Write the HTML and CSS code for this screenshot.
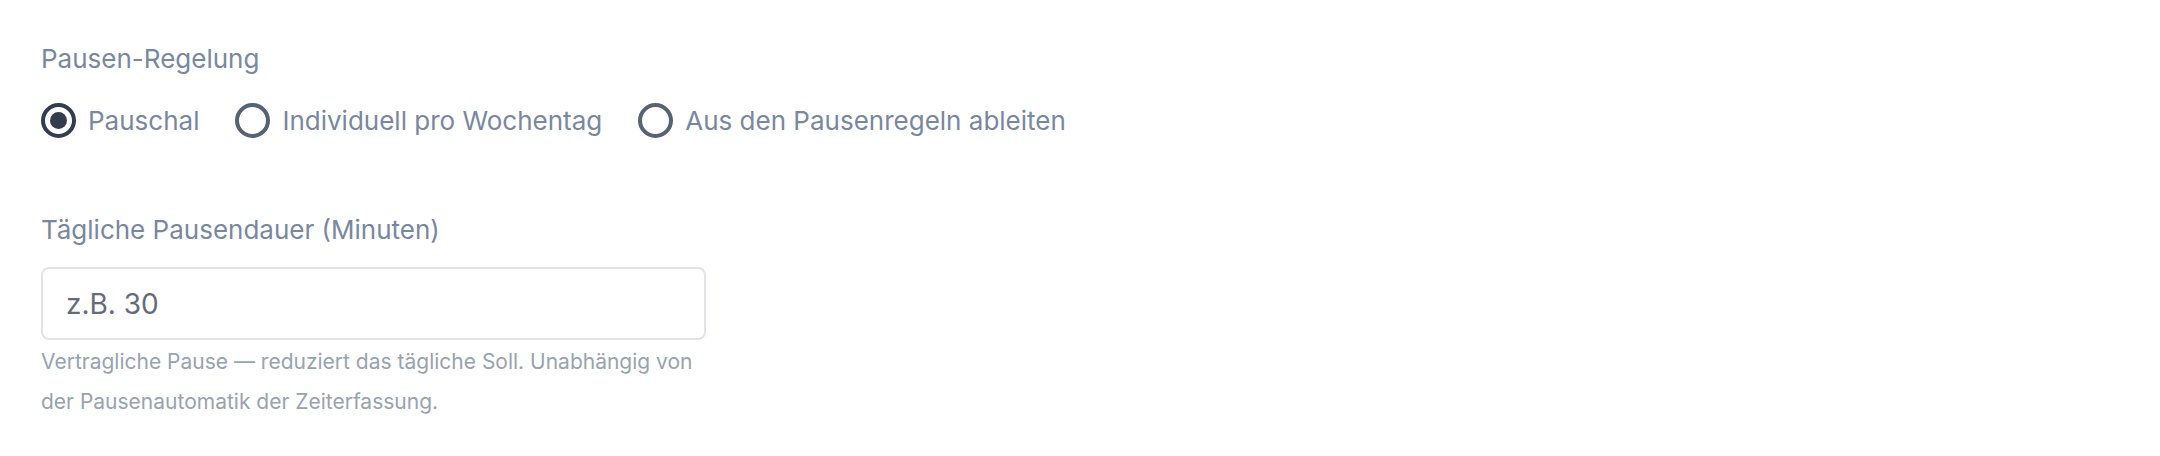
FILE: index.html
```html
<!DOCTYPE html>
<html lang="de">
<head>
  <meta charset="UTF-8">
  <title>Pausen-Regelung</title>
  <meta name="viewport" content="width=device-width, initial-scale=1">
  <link rel="stylesheet" href="styles.css">
</head>
<body>
  <div class="settings">
    <div class="field">
      <div class="field-label">Pausen-Regelung</div>
      <div class="radio-group">
        <label class="radio-option">
          <input type="radio" name="pauseMode" value="flat" checked>
          <span>Pauschal</span>
        </label>
        <label class="radio-option">
          <input type="radio" name="pauseMode" value="weekday">
          <span>Individuell pro Wochentag</span>
        </label>
        <label class="radio-option">
          <input type="radio" name="pauseMode" value="rules">
          <span>Aus den Pausenregeln ableiten</span>
        </label>
      </div>
    </div>

    <div class="field field-duration">
      <label class="field-label" for="pauseMinutes">Tägliche Pausendauer (Minuten)</label>
      <input type="number" id="pauseMinutes" class="text-input" placeholder="z.B. 30" min="0">
      <p class="hint">Vertragliche Pause — reduziert das tägliche Soll. Unabhängig von der Pausenautomatik der Zeiterfassung.</p>
    </div>
  </div>
</body>
</html>
```

FILE: styles.css
```css
:root {
  --label: #7888a0;
  --hint: #97a3ae;
  --radio: #556375;
  --radio-checked: #323d50;
  --border: #e2e4e8;
  --input-text: #636c78;
}
body {
  margin: 0;
  background: #fff;
  font-family: 'Inter', 'Liberation Sans', Arial, sans-serif;
}
.settings {
  padding: 42px 0 0 41px;
  width: 665px;
}
.field-label {
  display: block;
  font-size: 26px;
  line-height: 34px;
  color: var(--label);
}
.radio-group {
  display: flex;
  align-items: center;
  gap: 36px;
  margin-top: 26px;
  height: 36px;
}
.radio-option {
  display: flex;
  align-items: center;
  gap: 12px;
  font-size: 26px;
  color: var(--label);
  white-space: nowrap;
  cursor: pointer;
}
.radio-option input {
  appearance: none;
  -webkit-appearance: none;
  margin: 0;
  width: 35px;
  height: 35px;
  border: 4px solid var(--radio);
  border-radius: 50%;
  box-sizing: border-box;
  display: grid;
  place-items: center;
  background: #fff;
}
.radio-option input:checked {
  border-color: var(--radio-checked);
}
.radio-option input:checked::after {
  content: "";
  width: 17px;
  height: 17px;
  border-radius: 50%;
  background: var(--radio-checked);
}
.field-duration {
  margin-top: 75px;
}
.text-input {
  display: block;
  width: 100%;
  height: 73px;
  margin-top: 20px;
  padding: 0 23px;
  box-sizing: border-box;
  border: 2px solid var(--border);
  border-radius: 8px;
  font-family: inherit;
  font-size: 28px;
  color: var(--input-text);
  outline: none;
}
.text-input::placeholder {
  color: var(--input-text);
  opacity: 1;
}
.hint {
  margin: 2px 0 0;
  font-size: 21px;
  line-height: 40px;
  color: var(--hint);
}
```
